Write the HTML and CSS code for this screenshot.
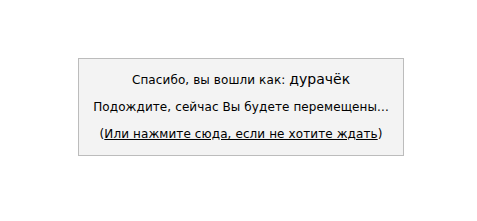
FILE: index.html
```html
<!DOCTYPE html>
<html lang="ru">
<head>
    <meta charset="UTF-8">
    <title>Переадресация</title>
    <link rel="stylesheet" href="styles.css">
</head>
<body>

<div class="redirect-box">
    <p class="line">Спасибо, вы вошли как: <span class="username">дурачёк</span></p>
    <p class="line">Подождите, сейчас Вы будете перемещены...</p>
    <p class="line">(<a href="#">Или нажмите сюда, если не хотите ждать</a>)</p>
</div>

</body>
</html>
```

FILE: styles.css
```css
body {
    margin: 0;
    padding: 0;
    background-color: #fff;
    font-family: "DejaVu Sans", Verdana, sans-serif;
    font-size: 12px;
    color: #000;
}

.redirect-box {
    width: 324px;
    margin: 58px 0 0 78px;
    padding: 7px 0;
    background-color: #f3f3f3;
    border: 1px solid #bcbcbc;
    text-align: center;
}

.line {
    margin: 0;
    line-height: 27px;
    letter-spacing: 0.1px;
}

.username {
    font-size: 14px;
    letter-spacing: 0;
}

a {
    color: #000;
    text-decoration: underline;
}
```
